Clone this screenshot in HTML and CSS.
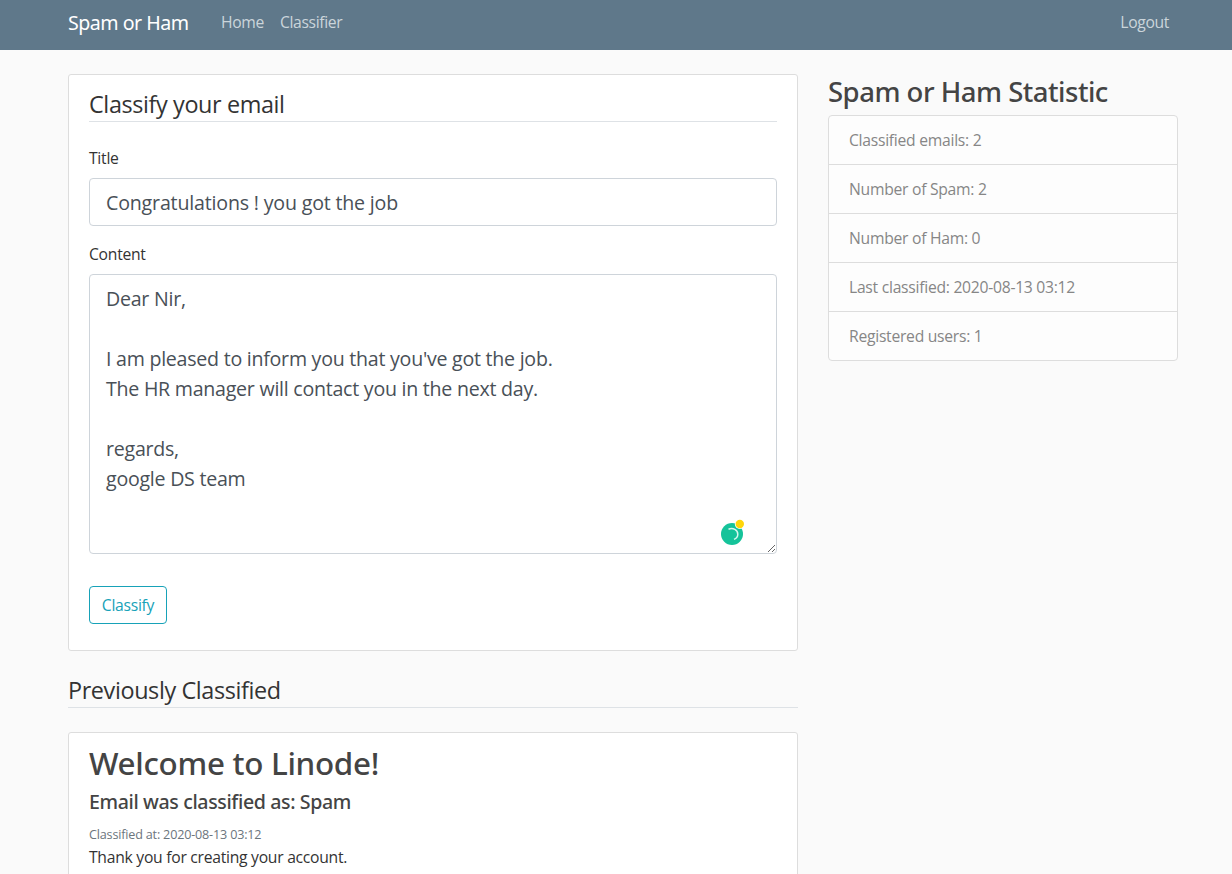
FILE: index.html
```html
<!DOCTYPE html>
<html lang="en">
<head>
<meta charset="utf-8">
<title>Spam or Ham</title>
<link rel="stylesheet" href="styles.css">
</head>
<body>
<header class="navbar">
  <a class="brand">Spam or Ham</a>
  <nav class="nav-main"><a>Home</a><a>Classifier</a></nav>
  <a>Logout</a>
</header>
<main class="container">
  <div class="primary">
    <form class="card form-card">
      <h2 class="legend">Classify your email</h2>
      <div class="group">
        <label for="title">Title</label>
        <input class="control control-title" id="title" type="text" value="Congratulations ! you got the job">
      </div>
      <div class="group">
        <label for="content">Content</label>
        <div class="editor">
          <textarea class="control control-content" id="content" spellcheck="false">Dear Nir,

I am pleased to inform you that you've got the job.
The HR manager will contact you in the next day.

regards,
google DS team</textarea>
          <svg class="assistant" width="26" height="28" viewBox="0 0 26 28">
            <circle cx="12" cy="15" r="11" fill="#15c39a"/>
            <path d="M8.5 10.2C13 8.2 17.8 11 17.8 15.2C17.8 17.6 16.4 19.4 14 20.4" fill="none" stroke="#d8f7ef" stroke-width="1.5"/>
            <circle cx="19.8" cy="5" r="5" fill="#fff"/>
            <circle cx="19.8" cy="5" r="4.2" fill="#ffd60a"/>
          </svg>
        </div>
      </div>
      <button class="submit" type="button">Classify</button>
    </form>
    <h2 class="legend legend-list">Previously Classified</h2>
    <article class="card entry">
      <h2 class="entry-title">Welcome to Linode!</h2>
      <h5 class="entry-result">Email was classified as: Spam</h5>
      <small class="entry-date">Classified at: 2020-08-13 03:12</small>
      <p class="entry-body">Thank you for creating your account.</p>
    </article>
  </div>
  <aside class="sidebar">
    <h3 class="sidebar-title">Spam or Ham Statistic</h3>
    <ul class="stats">
      <li>Classified emails: 2</li>
      <li>Number of Spam: 2</li>
      <li>Number of Ham: 0</li>
      <li>Last classified: 2020-08-13 03:12</li>
      <li>Registered users: 1</li>
    </ul>
  </aside>
</main>
</body>
</html>
```
FILE: styles.css
```css
* { box-sizing: border-box; }
html, body { height: 100%; overflow: hidden; }
body {
  margin: 0;
  background: #fafafa;
  color: #333;
  font: 400 15.7px/24px "Open Sans", "Noto Sans", sans-serif;
  letter-spacing: -0.27px;
}
h2, h3, h5, p, ul { margin: 0; padding: 0; }
.navbar {
  display: flex;
  align-items: center;
  height: 50px;
  padding: 0 63px 6px 68px;
  background: #5f788a;
  color: #cbd5db;
  letter-spacing: -0.35px;
}
.brand { width: 153px; padding-top: 2px; color: #fff; font-family: "Noto Sans", sans-serif; font-size: 19.6px; letter-spacing: -0.5px; }
.nav-main { display: flex; gap: 16px; flex: 1; }
.container {
  display: grid;
  grid-template-columns: 730px 350px;
  gap: 30px;
  margin: 24px 0 0 68px;
}
.card {
  padding: 10px 20px;
  background: #fff;
  border: 1px solid #ddd;
  border-radius: 3px;
}
.form-card { height: 577px; }
.legend {
  height: 37px;
  padding-top: 1px;
  border-bottom: 1px solid #dee2e6;
  margin-bottom: 24px;
  font-weight: 400;
  font-size: 23.4px;
  letter-spacing: -0.38px;
  line-height: 36px;
}
.group { display: flex; flex-direction: column; margin-bottom: 16px; }
.group label { height: 24px; margin-bottom: 8px; }
.control {
  display: block;
  width: 100%;
  height: 48px;
  padding: 9px 16px 7px;
  border: 1px solid #ced4da;
  border-radius: 4px;
  background: #fff;
  color: #495057;
  font: 400 19.6px/30px "Open Sans", "Noto Sans", sans-serif;
  letter-spacing: -0.25px;
  outline: 0;
}
.control-title { padding: 8px 16px; letter-spacing: -0.18px; }
.editor { position: relative; }
.control-content { height: 280px; resize: vertical; overflow: hidden; }
.assistant { position: absolute; left: 631px; top: 245px; }
.submit {
  width: 78px;
  height: 38px;
  margin-top: 16px;
  padding: 0;
  border: 1px solid #17a2b8;
  border-radius: 4px;
  background: #fff;
  color: #17a2b8;
  font: inherit;
  letter-spacing: inherit;
}
.legend-list { margin-top: 20px; }
.entry { height: 180px; }
.entry-title, .entry-result, .sidebar-title { font-family: "Noto Sans", sans-serif; font-weight: 500; color: #444; }
.entry-title { padding-top: 1px; font-size: 31.4px; letter-spacing: -0.3px; line-height: 38px; margin-bottom: 7px; }
.entry-result { padding-top: 1px; font-size: 19.6px; letter-spacing: -0.38px; line-height: 24px; margin-bottom: 8px; }
.entry-date { display: block; padding-top: 1px; font-size: 12.6px; letter-spacing: -0.18px; line-height: 24px; height: 24px; color: #6c757d; }
.entry-body { margin-top: -1px; line-height: 24px; }
.sidebar-title { font-size: 27.5px; letter-spacing: -0.5px; line-height: 35px; margin-bottom: 6px; }
.stats {
  list-style: none;
  border: 1px solid #ddd;
  border-radius: 4px;
  background: #fdfdfd;
  color: #868686;
}
.stats li { height: 49px; padding: 12px 20px; border-bottom: 1px solid #ddd; }
.stats li:last-child { height: 48px; border-bottom: 0; }
```
